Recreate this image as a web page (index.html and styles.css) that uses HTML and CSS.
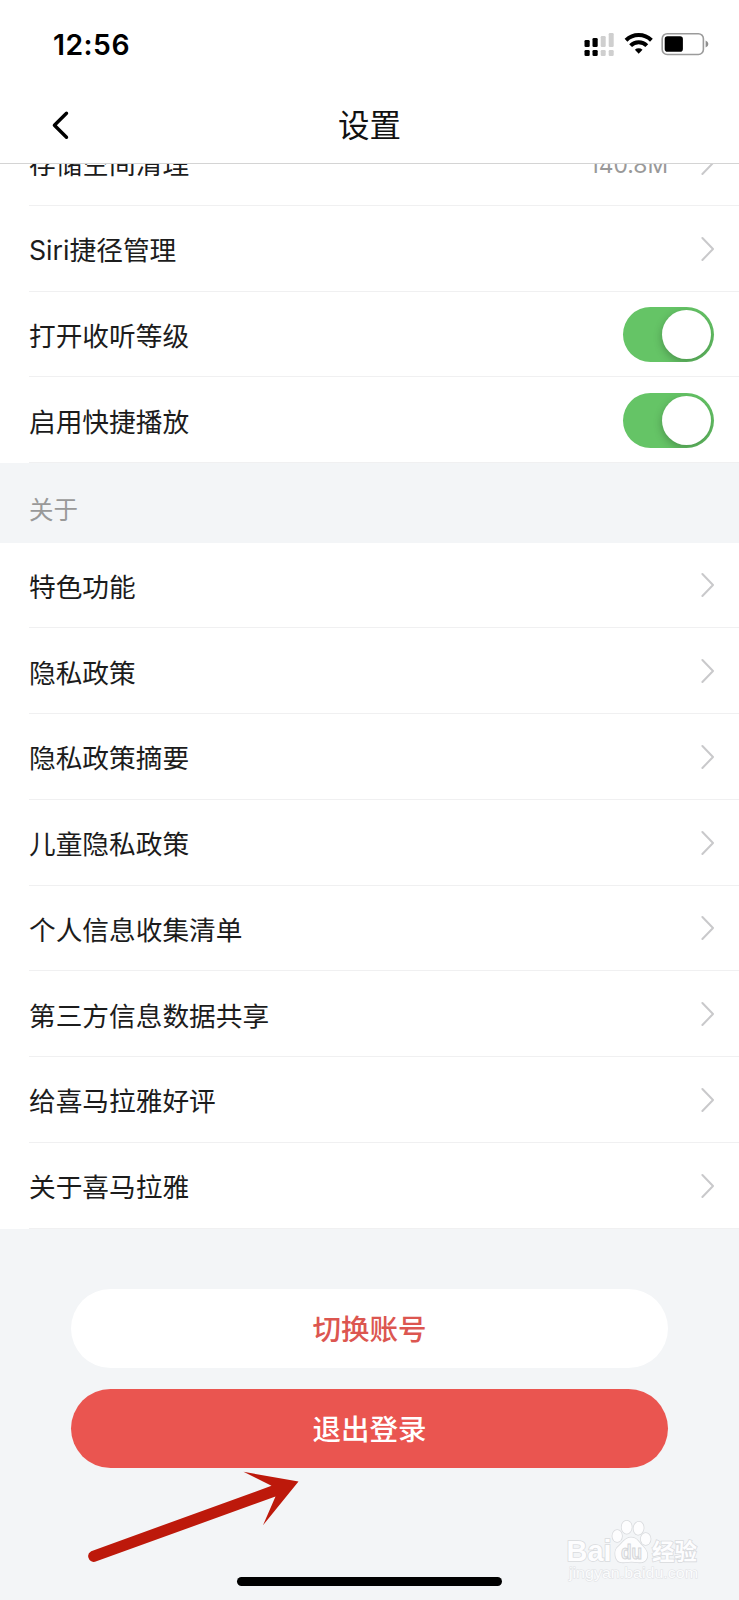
FILE: index.html
```html
<!DOCTYPE html>
<html lang="zh-CN">

<head>
  <meta charset="UTF-8">
  <meta name="viewport" content="width=device-width, initial-scale=1.0">
  <title>设置</title>
  <link rel="stylesheet" href="styles.css">
</head>

<body>
  <svg class="sprite">
    <symbol id="arrow" viewBox="0 0 14 26">
      <path d="M1.4 2 L12 13 L1.4 24" fill="none" stroke="currentColor" stroke-width="2" stroke-linecap="round" stroke-linejoin="round" />
    </symbol>
  </svg>
  <div class="page">
    <div class="header">
      <div class="status">
        <div class="time">12:56</div>
        <svg class="status-icons" width="128" height="28" viewBox="0 0 128 28">
          <g fill="#000">
            <rect x="0.5" y="10" width="5.2" height="7" rx="1.3" />
            <rect x="8.5" y="8" width="5.2" height="9" rx="1.3" />
            <rect x="0.5" y="20" width="5.2" height="6" rx="1.3" />
            <rect x="8.5" y="20" width="5.2" height="6" rx="1.3" />
          </g>
          <g fill="#cfcfcf">
            <rect x="16.7" y="6" width="5" height="11" rx="1.2" />
            <rect x="24.7" y="3" width="5" height="14" rx="1.2" />
            <rect x="16.7" y="20" width="5" height="6" rx="1.2" />
            <rect x="24.7" y="20" width="5" height="6" rx="1.2" />
          </g>
          <g fill="none" stroke="#000" stroke-width="4">
            <path d="M42 10.2 A18.3 18.3 0 0 1 67.4 10.2" />
            <path d="M46.6 15.6 A11.4 11.4 0 0 1 62.8 15.6" />
          </g>
          <path d="M50.9 19.8 A5.6 5.6 0 0 1 58.5 19.8 L54.7 23.8 Z" fill="#000" />
          <rect x="78.2" y="3.7" width="41.2" height="20.8" rx="5" fill="none" stroke="#9b9b9b" stroke-width="1.6" />
          <rect x="80.7" y="6.3" width="18.2" height="15.4" rx="2.8" fill="#000" />
          <path d="M121.6 10.5 Q124.4 11.5 124.4 14 Q124.4 16.5 121.6 17.5 Z" fill="#8e8e8e" />
        </svg>
      </div>
      <div class="nav">
        <svg class="back" width="20" height="32" viewBox="0 0 20 32">
          <path d="M16.5 3.2 L4.4 15.3 L16.5 27.3" fill="none" stroke="#000" stroke-width="3.4" stroke-linecap="round" stroke-linejoin="round" />
        </svg>
        <div class="title">设置</div>
      </div>
    </div>

    <div class="scroll">
      <div class="list scrolled">
        <div class="row"><span class="label">存储空间清理</span><span class="value">140.8M</span><svg class="arrow"><use href="#arrow" /></svg></div>
        <div class="row"><span class="label">Siri捷径管理</span><svg class="arrow"><use href="#arrow" /></svg></div>
        <div class="row"><span class="label">打开收听等级</span><div class="switch"></div></div>
        <div class="row"><span class="label">启用快捷播放</span><div class="switch"></div></div>
      </div>
      <div class="group">关于</div>
      <div class="list">
        <div class="row"><span class="label">特色功能</span><svg class="arrow"><use href="#arrow" /></svg></div>
        <div class="row"><span class="label">隐私政策</span><svg class="arrow"><use href="#arrow" /></svg></div>
        <div class="row"><span class="label">隐私政策摘要</span><svg class="arrow"><use href="#arrow" /></svg></div>
        <div class="row"><span class="label">儿童隐私政策</span><svg class="arrow"><use href="#arrow" /></svg></div>
        <div class="row"><span class="label">个人信息收集清单</span><svg class="arrow"><use href="#arrow" /></svg></div>
        <div class="row"><span class="label">第三方信息数据共享</span><svg class="arrow"><use href="#arrow" /></svg></div>
        <div class="row"><span class="label">给喜马拉雅好评</span><svg class="arrow"><use href="#arrow" /></svg></div>
        <div class="row"><span class="label">关于喜马拉雅</span><svg class="arrow"><use href="#arrow" /></svg></div>
      </div>
      <div class="buttons">
        <div class="button">切换账号</div>
        <div class="button logout">退出登录</div>
      </div>
    </div>

    <!-- overlays -->
    <svg class="pointer" width="220" height="100" viewBox="0 0 220 100">
      <path d="M5.2 77.2 L185.5 11.8 L157.5 -2.2 L212.5 7.4 L177 51.3 L189.5 22.5 L9 87.8 A5.7 5.7 0 0 1 5.2 77.2 Z" fill="#bd190b" />
    </svg>
    <svg class="watermark" width="140" height="70" viewBox="0 0 140 70">
      <g fill="#fdfdfe" stroke="#d9dbde" stroke-width="1.6" paint-order="stroke">
        <text class="wm-latin" x="0.5" y="46" textLength="45" lengthAdjust="spacingAndGlyphs">Bai</text>
        <ellipse cx="51.2" cy="21" rx="4.8" ry="6" />
        <ellipse cx="60.7" cy="12.2" rx="5" ry="6.5" />
        <ellipse cx="72.6" cy="13.2" rx="5" ry="6.5" transform="rotate(8 72.6 13.2)" />
        <ellipse cx="79.7" cy="24" rx="4.9" ry="6" />
        <path d="M65 22.5 C59 22.5 56.5 28 53 31 C49 34 49 37 49.5 41 C50.5 47 55 47.8 59 47.2 C63 46.5 68 46.5 72 47.2 C77 48 81 46 81.3 40.5 C81.5 36 79 33.5 76 30.5 C72.5 27 71 22.5 65 22.5 Z" />
        <text class="wm-cjk" x="86" y="45" textLength="45" lengthAdjust="spacingAndGlyphs">经验</text>
      </g>
      <text class="wm-du" x="55" y="43.5" textLength="21" lengthAdjust="spacingAndGlyphs">du</text>
      <text class="wm-url" x="3" y="63" textLength="129" lengthAdjust="spacingAndGlyphs">jingyan.baidu.com</text>
    </svg>
    <div class="home-bar"></div>
  </div>
</body>

</html>
```

FILE: styles.css
```css
* {
  margin: 0;
  padding: 0;
  box-sizing: border-box;
}

body {
  background: #f3f5f7;
  color: #1c1c1c;
  font-family: Inter, "Noto Sans CJK SC", sans-serif;
}

.sprite {
  display: none;
}

.page {
  position: relative;
  height: 1600px;
  overflow: hidden;
}

.header {
  height: 164px;
  background: #fff;
  border-bottom: 1px solid #d4d4d4;
}

.status {
  display: flex;
  justify-content: space-between;
  height: 88px;
  padding: 28px 27px 0 53px;
}

.time {
  padding-top: 1px;
  color: #000;
  font-size: 28.3px;
  font-weight: 600;
  letter-spacing: 0.5px;
  line-height: 33px;
}

.status-icons {
  margin-top: 2px;
}

.nav {
  display: grid;
  grid-template-columns: 70px 1fr 70px;
  align-items: center;
  height: 75px;
}

.back {
  justify-self: end;
}

.title {
  padding-bottom: 5px;
  text-align: center;
  color: #111;
  font-family: "Noto Sans CJK SC", sans-serif;
  font-size: 31.5px;
  line-height: 40px;
}

.scroll {
  overflow: hidden;
}

.list {
  padding-left: 29px;
  background: #fff;
}

.scrolled {
  margin-top: -44px;
}

.row {
  display: flex;
  align-items: center;
  height: 85.75px;
  padding-right: 24px;
  border-bottom: 1px solid #f0f0f1;
}

.label {
  flex: 1;
  padding-top: 4px;
  font-size: 26.7px;
  line-height: 40px;
}

.value {
  margin-right: 33px;
  padding-top: 5px;
  color: #999;
  font-size: 22.8px;
}

.arrow {
  width: 14px;
  height: 26px;
  margin-top: 1px;
  color: #c9c9cb;
}

.switch {
  width: 91px;
  height: 55px;
  margin: 2px 1px 0 0;
  padding: 3px;
  border-radius: 28px;
  background: #65c466;
  overflow: hidden;
}

.switch::after {
  content: "";
  display: block;
  width: 49px;
  height: 49px;
  margin-left: auto;
  border-radius: 50%;
  background: #fff;
  box-shadow: 0 3px 9px rgba(0, 0, 0, 0.25);
}

.group {
  height: 79.5px;
  padding: 11px 29px 0;
  color: #999;
  font-size: 24.5px;
  line-height: 72px;
}

.buttons {
  display: flex;
  flex-direction: column;
  gap: 21px;
  padding: 60.4px 71px 0;
}

.button {
  height: 79px;
  border-radius: 40px;
  background: #fff;
  color: #dc5650;
  font-size: 28.5px;
  font-weight: 500;
  line-height: 81px;
  text-align: center;
}

.logout {
  background: #ea5550;
  color: #fff;
}

.pointer {
  position: absolute;
  left: 86px;
  top: 1474px;
  overflow: visible;
}

.watermark {
  position: absolute;
  left: 566px;
  top: 1515px;
}

.wm-latin {
  font: bold 30px "Liberation Sans", sans-serif;
}

.wm-cjk {
  font: bold 23px "Noto Sans CJK SC", sans-serif;
}

.wm-du {
  fill: #f3f4f5;
  stroke: #d3d5d8;
  stroke-width: 1;
  font: bold 20px "Liberation Sans", sans-serif;
}

.wm-url {
  fill: #fbfcfd;
  stroke: #dfe1e4;
  stroke-width: 1;
  paint-order: stroke;
  font: 15.5px "Liberation Sans", sans-serif;
}

.home-bar {
  position: absolute;
  left: 237px;
  bottom: 14px;
  width: 265px;
  height: 9px;
  border-radius: 5px;
  background: #000;
}
```
